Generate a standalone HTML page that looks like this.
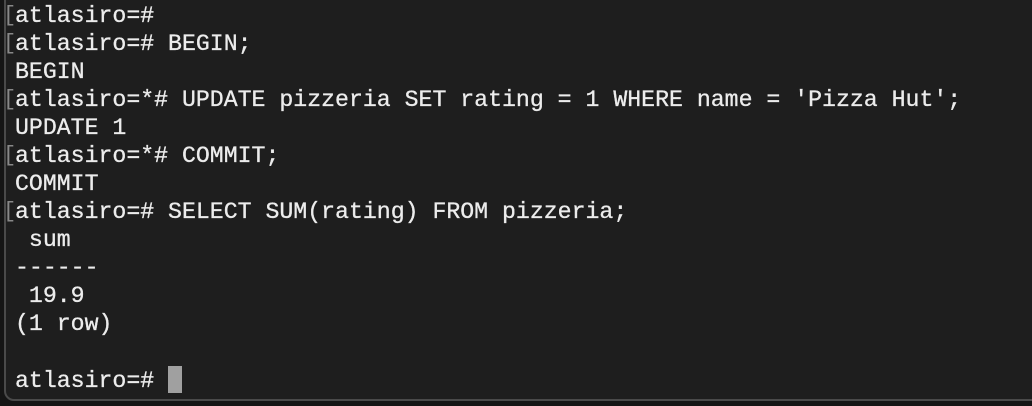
<!DOCTYPE html>
<html><head><style>
html,body{margin:0;padding:0;background:#151515;width:1032px;height:406px;overflow:hidden}
.term{position:absolute;left:4px;top:-10px;width:1040px;height:411px;background:#1e1e1e;border:2px solid #4a4a4a;border-radius:10px;box-sizing:border-box}
.txt{position:absolute;left:15px;top:2px;font-family:"Liberation Mono",monospace;font-size:23.2px;line-height:28px;color:#ececec;-webkit-text-stroke:0.3px #ececec}
.l{height:28px;position:relative;white-space:pre}
.b{position:absolute;left:-12px;color:#888;font-size:22px;-webkit-text-stroke:0}
.cur{display:inline-block;width:14px;height:27px;background:#a0a0a0;vertical-align:-6px}
</style></head><body>
<div class="term"></div>
<div class="txt">
<div class="l"><span class="b">[</span>atlasiro=#</div>
<div class="l"><span class="b">[</span>atlasiro=# BEGIN;</div>
<div class="l">BEGIN</div>
<div class="l"><span class="b">[</span>atlasiro=*# UPDATE pizzeria SET rating = 1 WHERE name = 'Pizza Hut';</div>
<div class="l">UPDATE 1</div>
<div class="l"><span class="b">[</span>atlasiro=*# COMMIT;</div>
<div class="l">COMMIT</div>
<div class="l"><span class="b">[</span>atlasiro=# SELECT SUM(rating) FROM pizzeria;</div>
<div class="l"> sum</div>
<div class="l">------</div>
<div class="l"> 19.9</div>
<div class="l">(1 row)</div>
<div class="l"></div>
<div class="l">atlasiro=# <span class="cur"></span></div>
</div>
</body></html>
